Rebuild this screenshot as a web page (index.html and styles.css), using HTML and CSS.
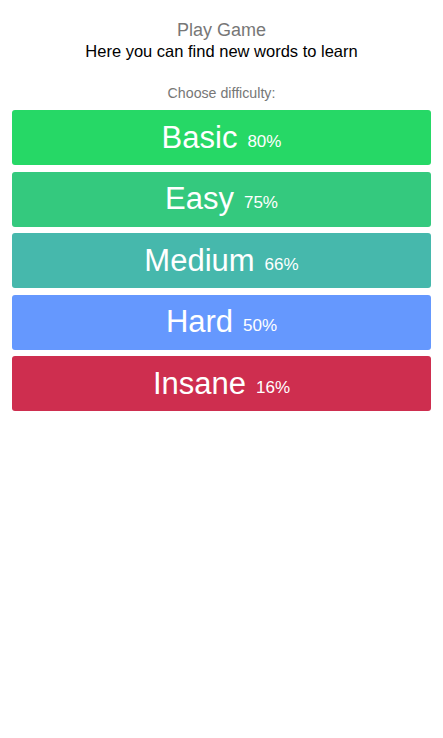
FILE: index.html
```html
<!DOCTYPE html>
<html>
<head>
<meta charset="utf-8">
<link rel="stylesheet" href="styles.css">
</head>
<body>
<div class="page">
  <header class="head">
    <div class="title">Play Game</div>
    <div class="subtitle">Here you can find new words to learn</div>
  </header>
  <div class="choose">Choose difficulty:</div>
  <div class="levels">
    <div class="level basic"><span class="name">Basic</span><span class="pct">80%</span></div>
    <div class="level easy"><span class="name">Easy</span><span class="pct">75%</span></div>
    <div class="level medium"><span class="name">Medium</span><span class="pct">66%</span></div>
    <div class="level hard"><span class="name">Hard</span><span class="pct">50%</span></div>
    <div class="level insane"><span class="name">Insane</span><span class="pct">16%</span></div>
  </div>
</div>
</body>
</html>
```
FILE: styles.css
```css
html, body {
  margin: 0;
  padding: 0;
  background: #fff;
  font-family: "Liberation Sans", Arial, sans-serif;
}
.page {
  padding: 20px 12px 0 12px;
}
.head {
  text-align: center;
}
.title {
  font-size: 18px;
  line-height: 21px;
  color: #777;
}
.subtitle {
  font-size: 16.5px;
  line-height: 20px;
  color: #000;
}
.choose {
  text-align: center;
  font-size: 14.2px;
  line-height: 18px;
  color: #777;
  margin-top: 23px;
  margin-bottom: 8px;
}
.levels {
  display: flex;
  flex-direction: column;
  gap: 6.5px;
}
.level {
  height: 55px;
  border-radius: 3px;
  display: flex;
  align-items: center;
  justify-content: center;
  color: #fff;
  gap: 10px;
}
.name {
  font-size: 31px;
  line-height: 36px;
}
.pct {
  font-size: 17px;
  line-height: 20px;
  margin-top: 8px;
}
.basic { background: #26d866; }
.easy { background: #34c97e; }
.medium { background: #46b8ac; }
.hard { background: #6598fe; }
.insane { background: #ce2e4f; }
```
